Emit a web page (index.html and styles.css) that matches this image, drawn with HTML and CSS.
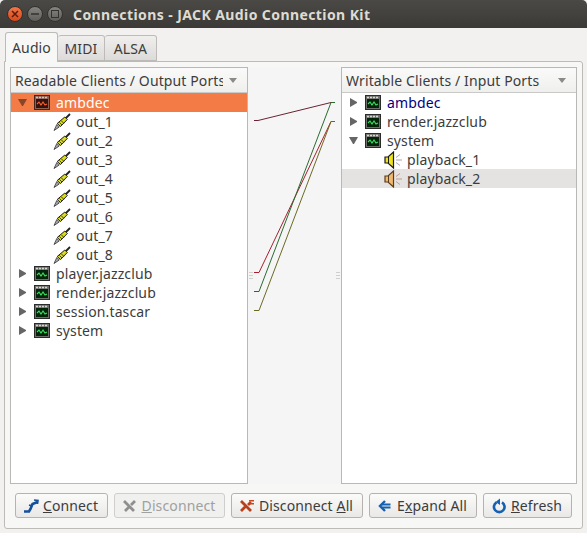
FILE: index.html
```html
<!DOCTYPE html>
<html lang="en">
<head>
    <meta charset="UTF-8">
    <title>Connections - JACK Audio Connection Kit</title>
    <link rel="stylesheet" href="styles.css">
</head>
<body>
    <svg class="defs" width="0" height="0">
        <symbol id="client" viewBox="0 0 16 16">
            <rect x="0.500" y="0.500" width="15" height="14" fill="#6f6f6b" stroke="#2b2b2b"/>
            <path d="M2 2.500h12" stroke="#d8d8d8" stroke-width="1.500" stroke-dasharray="2 1"/>
            <rect x="2" y="4" width="12" height="9" fill="#04240a"/>
            <path d="M3 9l2-2 2 3 2-3 2 3 2-1" fill="none" stroke="#39e060" stroke-width="1.100"/>
        </symbol>
        <symbol id="client-sel" viewBox="0 0 16 16">
            <rect x="0.500" y="0.500" width="15" height="14" fill="#8a6152" stroke="#46261c"/>
            <path d="M2 2.500h12" stroke="#d8c0c8" stroke-width="1.500" stroke-dasharray="2 1"/>
            <rect x="2" y="4" width="12" height="9" fill="#34100e"/>
            <path d="M3 9l2-2 2 3 2-3 2 3 2-1" fill="none" stroke="#f9602c" stroke-width="1.100"/>
        </symbol>
        <symbol id="jack" viewBox="0 0 18 18">
            <path d="M17 1l-4.500 4.500" stroke="#222" stroke-width="1.800"/>
            <path d="M11.800 4l2.500 2.500-6.800 7-3.300-3z" fill="#dcdc1e" stroke="#1c1c1c"/>
            <path d="M8 7.500l2.800 2.800M6.300 9.300l2.700 2.700" stroke="#4a4a14"/>
            <path d="M3.800 11.500l2.500 2.500L1 17.500z" fill="#a8a8a8" stroke="#333" stroke-width="0.800"/>
        </symbol>
        <symbol id="speaker" viewBox="0 0 20 18">
            <path d="M1 6h3l5.500-5v16L4 12H1z" fill="#ece41e" stroke="#1c1c1c" stroke-width="1.200"/>
            <path d="M4.500 6v6" stroke="#1c1c1c"/>
            <path d="M12 9h6M12 6.500l4-3M12 11.500l4 3" stroke="#a8a8a8"/>
        </symbol>
        <symbol id="speaker-sel" viewBox="0 0 20 18">
            <path d="M1 6h3l5.500-5v16L4 12H1z" fill="#efba6e" stroke="#5a3a20" stroke-width="1.200"/>
            <path d="M4.500 6v6" stroke="#5a3a20"/>
            <path d="M12 9h6M12 6.500l4-3M12 11.500l4 3" stroke="#c49a8e"/>
        </symbol>
    </svg>

    <div class="titlebar">
        <div class="win-buttons">
            <span class="win-btn close">
                <svg width="8" height="8" viewBox="0 0 8 8"><path d="M1 1l6 6M7 1L1 7" stroke="#5a1d08" stroke-width="1.500"/></svg>
            </span>
            <span class="win-btn">
                <svg width="8" height="8" viewBox="0 0 8 8"><path d="M0 4h8" stroke="#33322e" stroke-width="1.500"/></svg>
            </span>
            <span class="win-btn">
                <svg width="8" height="8" viewBox="0 0 8 8"><rect x="0.500" y="0.500" width="7" height="7" fill="none" stroke="#33322e"/></svg>
            </span>
        </div>
        <div class="title">Connections - JACK Audio Connection Kit</div>
    </div>

    <div class="tabs">
        <div class="tab active">Audio</div>
        <div class="tab tab-midi">MIDI</div>
        <div class="tab tab-alsa">ALSA</div>
    </div>

    <div class="pane">
        <div class="lists">
            <div class="tree tree-out">
                <div class="tree-header">
                    <span class="header-label">Readable Clients / Output Ports</span>
                    <span class="sort-arrow"></span>
                </div>
                <div class="row selected">
                    <span class="arrow down"></span>
                    <svg class="icon"><use href="#client-sel"/></svg>
                    <span>ambdec</span>
                </div>
                <div class="row port"><svg class="icon"><use href="#jack"/></svg><span>out_1</span></div>
                <div class="row port"><svg class="icon"><use href="#jack"/></svg><span>out_2</span></div>
                <div class="row port"><svg class="icon"><use href="#jack"/></svg><span>out_3</span></div>
                <div class="row port"><svg class="icon"><use href="#jack"/></svg><span>out_4</span></div>
                <div class="row port"><svg class="icon"><use href="#jack"/></svg><span>out_5</span></div>
                <div class="row port"><svg class="icon"><use href="#jack"/></svg><span>out_6</span></div>
                <div class="row port"><svg class="icon"><use href="#jack"/></svg><span>out_7</span></div>
                <div class="row port"><svg class="icon"><use href="#jack"/></svg><span>out_8</span></div>
                <div class="row"><span class="arrow right"></span><svg class="icon"><use href="#client"/></svg><span>player.jazzclub</span></div>
                <div class="row"><span class="arrow right"></span><svg class="icon"><use href="#client"/></svg><span>render.jazzclub</span></div>
                <div class="row"><span class="arrow right"></span><svg class="icon"><use href="#client"/></svg><span>session.tascar</span></div>
                <div class="row"><span class="arrow right"></span><svg class="icon"><use href="#client"/></svg><span>system</span></div>
            </div>

            <div class="canvas">
                <svg class="wires" width="93" height="417" viewBox="248 67 93 417">
                    <g fill="none" stroke-width="1">
                        <path d="M254 120.500h4L331 102.500h4" stroke="#6b2233"/>
                        <path d="M254 272.500h5L331 121.500" stroke="#a5202e"/>
                        <path d="M254 291.500h5L331 102.500h4" stroke="#2a6a30"/>
                        <path d="M254 310.500h5L331 121.500h4" stroke="#6a6a24"/>
                    </g>
                </svg>
                <div class="grip left"><i></i><i></i><i></i></div>
                <div class="grip right"><i></i><i></i><i></i></div>
            </div>

            <div class="tree tree-in">
                <div class="tree-header">
                    <span class="header-label">Writable Clients / Input Ports</span>
                    <span class="sort-arrow"></span>
                </div>
                <div class="row"><span class="arrow right"></span><svg class="icon"><use href="#client"/></svg><span class="connected">ambdec</span></div>
                <div class="row"><span class="arrow right"></span><svg class="icon"><use href="#client"/></svg><span>render.jazzclub</span></div>
                <div class="row"><span class="arrow down"></span><svg class="icon"><use href="#client"/></svg><span>system</span></div>
                <div class="row port"><svg class="icon wide"><use href="#speaker"/></svg><span>playback_1</span></div>
                <div class="row port current"><svg class="icon wide"><use href="#speaker-sel"/></svg><span>playback_2</span></div>
            </div>
        </div>

        <div class="buttons">
            <button class="btn btn-connect">
                <svg width="16" height="16" viewBox="0 0 16 16"><path d="M1 13.500h5l1.500-2.500 2-5 5-2" fill="none" stroke="#14509c" stroke-width="2.600"/><path d="M11 2l4 .5-.5 3.500M6 7l3 1" fill="none" stroke="#14509c" stroke-width="1.600"/></svg>
                <span><u>C</u>onnect</span>
            </button>
            <button class="btn btn-disconnect" disabled>
                <svg width="16" height="16" viewBox="0 0 16 16"><path d="M2 3l10 10M3 13l4-4M9 7l4-4" fill="none" stroke="#8f8f8f" stroke-width="2.800"/></svg>
                <span><u>D</u>isconnect</span>
            </button>
            <button class="btn btn-all">
                <svg width="16" height="16" viewBox="0 0 16 16"><path d="M2 3l10 10M2 13l4.500-4.500M9 7l3-3" fill="none" stroke="#b8401a" stroke-width="2.800"/><path d="M10 2h5v1.500h-5zM11 5h4v1.500h-4z" fill="#c84a1c"/></svg>
                <span>Disconnect <u>A</u>ll</span>
            </button>
            <button class="btn btn-expand">
                <svg width="16" height="16" viewBox="0 0 16 16"><path d="M8 3L3 8l5 5" fill="none" stroke="#1560b0" stroke-width="2.400"/><path d="M5 6.500h8.500M5 9.500h8.500" stroke="#1560b0" stroke-width="1.800"/></svg>
                <span>E<u>x</u>pand All</span>
            </button>
            <button class="btn btn-refresh">
                <svg width="16" height="16" viewBox="0 0 16 16"><path d="M5.500 4.300A5.300 5.300 0 1 0 11 4.300" fill="none" stroke="#1560b0" stroke-width="2.600"/><path d="M9 .500v6.500L4.500 4z" fill="#1560b0"/></svg>
                <span><u>R</u>efresh</span>
            </button>
        </div>
    </div>
</body>
</html>
```

FILE: styles.css
```css
* {
    box-sizing: border-box;
}

body {
    margin: 0;
    width: 587px;
    height: 533px;
    overflow: hidden;
    background: #f2f1f0;
    color: #3c3c3c;
    font-family: "Noto Sans", sans-serif;
    font-size: 14px;
    letter-spacing: 0.12px;
}

.defs {
    position: absolute;
}

.titlebar {
    height: 28px;
    background: linear-gradient(#4a4945, #3b3a36);
    border-radius: 5px 5px 0 0;
    display: flex;
    align-items: center;
}

.win-buttons {
    display: flex;
    gap: 4px;
    padding-left: 7px;
    width: 73px;
}

.win-btn {
    width: 16px;
    height: 16px;
    border-radius: 50%;
    background: linear-gradient(#858480, #5f5e59);
    border: 1px solid #33322e;
    display: flex;
    align-items: center;
    justify-content: center;
}

.win-btn.close {
    background: linear-gradient(#f0764a, #d8481c);
}

.title {
    color: #dfdbd2;
    font-weight: bold;
    font-size: 14px;
    letter-spacing: 0.41px;
    white-space: nowrap;
}

.tabs {
    display: flex;
    padding: 4px 0 0 5px;
    height: 34px;
}

.tab {
    height: 26px;
    margin-top: 3px;
    line-height: 25px;
    text-align: center;
    background: linear-gradient(#f0efee, #dcdbd9);
    border: 1px solid #bdbbb8;
    border-left: 0;
    border-radius: 3px 3px 0 0;
}

.tab-midi {
    width: 47px;
}

.tab-alsa {
    width: 52px;
}

.tab.active {
    width: 53px;
    height: 30px;
    margin-top: 0;
    line-height: 29px;
    background: #f7f7f6;
    border-left: 1px solid #bdbbb8;
    border-bottom: 0;
    position: relative;
    z-index: 1;
}

.pane {
    height: 468px;
    margin: -1px 4px 0;
    padding: 5px 5px 0;
    background: #f7f7f6;
    border: 1px solid #bdbbb8;
    border-radius: 0 3px 3px 3px;
}

.lists {
    display: flex;
    height: 417px;
}

.tree {
    background: #fff;
    border: 1px solid #b8b8b6;
}

.tree-out {
    width: 238px;
}

.tree-in {
    width: 236px;
}

.tree-header {
    height: 25px;
    display: flex;
    align-items: center;
    justify-content: space-between;
    padding: 0 10px 0 4px;
    background: linear-gradient(#fafafa, #efefed);
    border-bottom: 1px solid #c9c9c7;
}

.header-label {
    width: 208px;
    overflow: hidden;
    white-space: nowrap;
}

.sort-arrow {
    border-left: 4px solid transparent;
    border-right: 4px solid transparent;
    border-top: 5px solid #8a8a88;
}

.row {
    height: 19px;
    display: flex;
    align-items: center;
    padding-left: 7px;
    white-space: nowrap;
}

.row.port {
    padding-left: 42px;
}

.row.selected {
    background: #f37b46;
    color: #fff;
}

.row.current {
    background: #e4e3e1;
}

.connected {
    color: #00007f;
}

.arrow {
    width: 9px;
    height: 10px;
    margin-right: 7px;
    flex: none;
}

.arrow.right {
    border-left: 7px solid #666;
    border-top: 4px solid transparent;
    border-bottom: 4px solid transparent;
    width: 7px;
    height: 9px;
    margin-left: 1px;
    margin-right: 8px;
}

.arrow.down {
    border-top: 7px solid #666;
    border-left: 4px solid transparent;
    border-right: 4px solid transparent;
    height: 7px;
}

.selected .arrow.down {
    border-top-color: #8a4526;
}

.icon {
    width: 16px;
    height: 16px;
    margin-right: 6px;
    flex: none;
}

.port .icon {
    width: 18px;
    height: 18px;
    margin-right: 5px;
}

.port .icon.wide {
    width: 20px;
    height: 18px;
    margin-right: 3px;
}

.canvas {
    width: 93px;
    position: relative;
    background: #f5f5f5;
}

.wires {
    display: block;
}

.grip {
    position: absolute;
    top: 205px;
    display: flex;
    flex-direction: column;
    gap: 2px;
}

.grip.left {
    left: 1px;
}

.grip.right {
    right: 1px;
}

.grip i {
    display: block;
    width: 4px;
    height: 1px;
    background: #cfcfcd;
}

.buttons {
    display: flex;
    gap: 6px;
    padding: 9px 0 0 5px;
}

.btn {
    height: 25px;
    display: flex;
    align-items: center;
    justify-content: center;
    gap: 4px;
    padding: 0 2px 0 0;
    background: linear-gradient(#fbfbfa, #e9e8e6);
    border: 1px solid #b4b3b0;
    border-radius: 3px;
    color: #3c3c3c;
    font-family: inherit;
    font-size: 14px;
    letter-spacing: inherit;
}

.btn:disabled {
    color: #a0a09e;
    background: #f0f0ee;
    border-color: #cfcecc;
}

.btn-connect {
    width: 93px;
}

.btn-disconnect {
    width: 111px;
}

.btn-all {
    width: 132px;
}

.btn-expand {
    width: 108px;
}

.btn-refresh {
    width: 89px;
}
```
